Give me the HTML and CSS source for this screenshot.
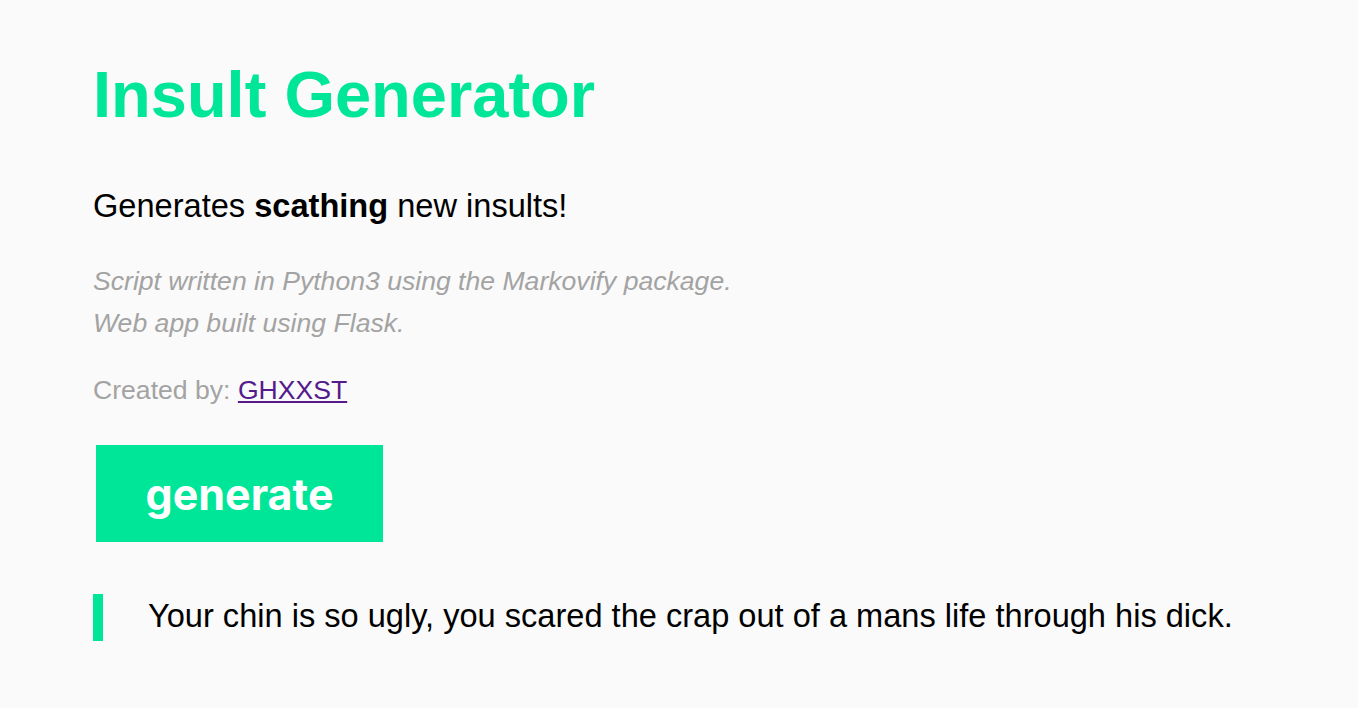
FILE: index.html
```html
<!DOCTYPE html>
<html lang="en">
<head>
<meta charset="utf-8">
<title>Insult Generator</title>
<link rel="stylesheet" href="styles.css">
</head>
<body>
<main class="page">
  <h1 class="title">Insult Generator</h1>
  <p class="lead">Generates <strong>scathing</strong> new insults!</p>
  <p class="notes">Script written in Python3 using the Markovify package.<br>Web app built using Flask.</p>
  <p class="credit">Created by: <a href="#" class="credit-link">GHXXST</a></p>
  <button class="gen-btn" type="button">generate</button>
  <blockquote class="insult">
    <span class="insult-bar"></span>
    <span class="insult-text">Your chin is so ugly, you scared the crap out of a mans life through his dick.</span>
  </blockquote>
</main>
</body>
</html>
```
FILE: styles.css
```css
html, body {
  margin: 0;
  padding: 0;
  background: #fafafa;
}
body {
  font-family: "Liberation Sans", Arial, Helvetica, sans-serif;
  color: #000;
}
.page {
  display: flex;
  flex-direction: column;
  align-items: flex-start;
  padding: 57px 0 0 93px;
}
.title {
  margin: 0;
  font-size: 65px;
  line-height: 75px;
  font-weight: 700;
  color: #00e699;
}
.lead {
  margin: 54px 0 0;
  font-size: 32.6px;
  line-height: 40px;
}
.lead strong {
  font-weight: 700;
}
.notes {
  margin: 34px 0 0;
  font-size: 26.6px;
  line-height: 42px;
  font-style: italic;
  color: #a3a3a3;
}
.credit {
  margin: 25px 0 0;
  font-size: 26.6px;
  line-height: 42px;
  color: #a3a3a3;
}
.credit-link {
  color: #551a8b;
}
.gen-btn {
  margin: 34px 0 0 3px;
  width: 287px;
  height: 97px;
  border: 0;
  border-radius: 0;
  background: #00e699;
  color: #fff;
  font-family: Inter, "Noto Sans", sans-serif;
  font-weight: 700;
  font-size: 43px;
  padding: 0;
  cursor: pointer;
}
.insult {
  margin: 52px 0 0;
  display: flex;
  align-items: center;
  gap: 45px;
}
.insult-bar {
  width: 10px;
  height: 47px;
  background: #00e699;
  flex: none;
}
.insult-text {
  font-size: 32.6px;
  line-height: 40px;
  margin-top: -4px;
}
```
